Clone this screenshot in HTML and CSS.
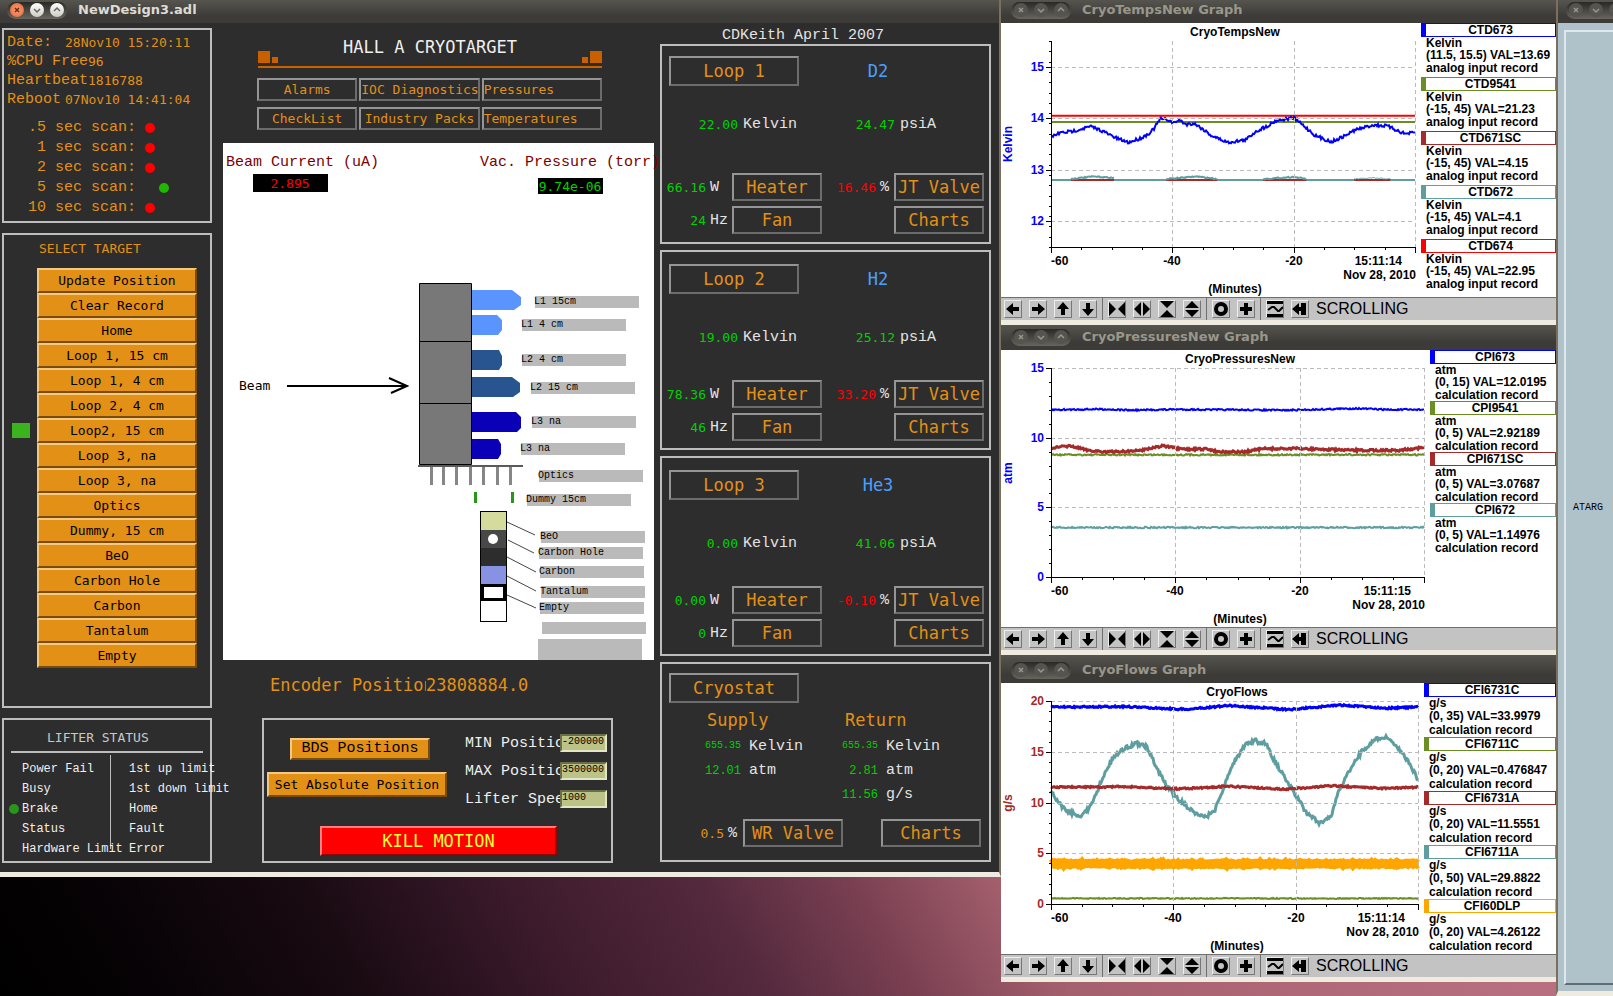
FILE: index.html
```html
<!DOCTYPE html>
<html lang="en">
<head>
    <meta charset="UTF-8">
    <meta name="viewport" content="width=device-width, initial-scale=1.0">
    <title>NewDesign3.adl</title>
    <link rel="stylesheet" href="styles.css">
</head>
<body>
    <!-- shared icons -->
    <svg class="defs" width="0" height="0">
        <symbol id="close" viewBox="0 0 14 14"><path d="M5 5l4 4M9 5l-4 4" fill="none" stroke="currentColor" stroke-width="1.5"/></symbol>
        <symbol id="min" viewBox="0 0 14 14"><path d="M4 6l3 3 3-3" fill="none" stroke="currentColor" stroke-width="1.5"/></symbol>
        <symbol id="max" viewBox="0 0 14 14"><path d="M4 8l3-3 3 3" fill="none" stroke="currentColor" stroke-width="1.5"/></symbol>
        <symbol id="left" viewBox="0 0 16 16"><path d="M1 8l7-6v4h6v4H8v4z"/></symbol>
        <symbol id="right" viewBox="0 0 16 16"><path d="M15 8L8 2v4H2v4h6v4z"/></symbol>
        <symbol id="up" viewBox="0 0 16 16"><path d="M8 1L2 8h4v6h4V8h4z"/></symbol>
        <symbol id="down" viewBox="0 0 16 16"><path d="M8 15L2 8h4V2h4v6h4z"/></symbol>
        <symbol id="xin" viewBox="0 0 16 16"><path d="M0 1l7 7-7 7zM16 1L9 8l7 7z"/></symbol>
        <symbol id="xout" viewBox="0 0 16 16"><path d="M7 1v14L0 8zM9 1v14l7-7z"/></symbol>
        <symbol id="yin" viewBox="0 0 16 16"><path d="M1 0h14L8 7zM1 16h14L8 9z"/></symbol>
        <symbol id="yout" viewBox="0 0 16 16"><path d="M1 7h14L8 0zM1 9h14l-7 7z"/></symbol>
        <symbol id="reset" viewBox="0 0 16 16"><ellipse cx="8" cy="8" rx="5" ry="5" fill="none" stroke="#000" stroke-width="4"/></symbol>
        <symbol id="plus" viewBox="0 0 16 16"><path d="M6 2h4v4h4v4h-4v4H6v-4H2V6h4z"/></symbol>
        <symbol id="wave" viewBox="0 0 16 16"><path d="M0 0h16v3H0zM0 13h16v3H0z"/><path d="M1 9l4-3h2l4 4h1l4-4" fill="none" stroke="#000" stroke-width="2"/></symbol>
        <symbol id="end" viewBox="0 0 16 16"><path d="M0 8l7-6v4h2V2h5v12H9v-4H7v4z"/></symbol>
    </svg>

    <main class="window medm">
        <header class="titlebar active">
            <div class="controls">
                <button aria-label="Close" class="hot"><svg><use href="#close"/></svg></button>
                <button aria-label="Minimize"><svg><use href="#min"/></svg></button>
                <button aria-label="Maximize"><svg><use href="#max"/></svg></button>
            </div>
            <h1>NewDesign3.adl</h1>
        </header>

        <div class="panels">
            <div class="side">
                <section class="box status">
                    <p><span class="key">Date:</span><span class="val">28Nov10 15:20:11</span></p>
                    <p><span>%CPU Free</span><span class="val">96</span></p>
                    <p><span>Heartbeat</span><span class="val">1816788</span></p>
                    <p><span class="key">Reboot</span><span class="val">07Nov10 14:41:04</span></p>
                    <ul class="scans">
                        <li><span>.5 sec scan:</span><i class="led"></i></li>
                        <li><span>1 sec scan:</span><i class="led"></i></li>
                        <li><span>2 sec scan:</span><i class="led"></i></li>
                        <li><span>5 sec scan:</span><i class="led ok"></i></li>
                        <li><span>10 sec scan:</span><i class="led"></i></li>
                    </ul>
                </section>

                <section class="box targets">
                    <h2>SELECT TARGET</h2>
                    <ul>
                        <li><button>Update Position</button></li>
                        <li><button>Clear Record</button></li>
                        <li><button>Home</button></li>
                        <li><button>Loop 1, 15 cm</button></li>
                        <li><button>Loop 1, 4 cm</button></li>
                        <li><button>Loop 2, 4 cm</button></li>
                        <li><i class="marker"></i><button>Loop2, 15 cm</button></li>
                        <li><button>Loop 3, na</button></li>
                        <li><button>Loop 3, na</button></li>
                        <li><button>Optics</button></li>
                        <li><button>Dummy, 15 cm</button></li>
                        <li><button>BeO</button></li>
                        <li><button>Carbon Hole</button></li>
                        <li><button>Carbon</button></li>
                        <li><button>Tantalum</button></li>
                        <li><button>Empty</button></li>
                    </ul>
                </section>

                <section class="box lifter">
                    <h2>LIFTER STATUS</h2>
                    <ul>
                        <li><span>Power Fail</span><span>1st up limit</span></li>
                        <li><span>Busy</span><span>1st down limit</span></li>
                        <li><i class="led"></i><span>Brake</span><span>Home</span></li>
                        <li><span>Status</span><span>Fault</span></li>
                        <li><span>Hardware Limit</span><span>Error</span></li>
                    </ul>
                </section>
            </div>

            <div class="center">
                <div class="banner">
                    <i class="sq"></i><i class="sq small"></i>
                    <h2>HALL A CRYOTARGET</h2>
                    <i class="sq small"></i><i class="sq"></i>
                </div>
                <nav class="menu">
                    <button class="flat">Alarms</button>
                    <button class="flat">IOC Diagnostics</button>
                    <button class="flat start">Pressures</button>
                    <button class="flat">CheckList</button>
                    <button class="flat">Industry Packs</button>
                    <button class="flat start">Temperatures</button>
                </nav>

                <svg class="diagram" viewBox="0 0 431 517">
                    <g class="caption">
                        <text x="3" y="23">Beam Current (uA)</text>
                        <text x="257" y="23">Vac. Pressure (torr)</text>
                    </g>
                    <rect x="30" y="31" width="75" height="18"/>
                    <text class="reading" x="67" y="45" fill="#f00">2.895</text>
                    <rect x="315" y="35" width="65" height="16"/>
                    <text class="reading" x="347" y="48" fill="#00d000">9.74e-06</text>

                    <!-- beam -->
                    <text class="beam" x="16" y="247">Beam</text>
                    <path d="M64 243h120M166 235l18 8-16 7" fill="none" stroke="#000" stroke-width="2"/>

                    <!-- cells -->
                    <path d="M196.500 140.500h52v181h-52zM196.500 198.500h52M196.500 260.500h52" fill="#787878" stroke="#000"/>
                    <path d="M249 147h40l9 7v8l-7 5h-42zM249 172h25l5 5v10l-4 5h-26z" fill="#5a94ff"/>
                    <path d="M249 207h27l3 6v9l-3 5h-27zM249 234h40l8 6v9l-7 5h-41z" fill="#28558f"/>
                    <path d="M249 269h44l5 5v11l-4 4h-45zM249 296h26l3 5v10l-3 5h-26z" fill="#0a00b8"/>
                    <path d="M195 322h105v2H195z" fill="#5a5a5a"/>
                    <path d="M208.500 324v18M220.500 324v18M233.500 324v18M247.500 324v18M260.500 324v18M274.500 324v18M287.500 324v18" stroke="#868686" stroke-width="3"/>
                    <path d="M251 349h3v11h-3zM288 349h3v11h-3z" fill="#27961a"/>

                    <!-- solid targets -->
                    <rect x="257" y="368" width="27" height="19" fill="#d5db9d"/>
                    <rect x="257" y="387" width="27" height="18" fill="#484848"/>
                    <circle cx="270" cy="396" r="5" fill="#fff"/>
                    <rect x="257" y="405" width="27" height="18" fill="#2d2d2d"/>
                    <rect x="257" y="423" width="27" height="18" fill="#8793e2"/>
                    <rect x="257" y="441" width="27" height="17"/>
                    <rect x="261" y="444" width="19" height="11" fill="#fff"/>
                    <rect x="257.500" y="368.500" width="26" height="110" fill="none" stroke="#000"/>
                    <path d="M284 379l28 13M285 397l26 13M284 414l29 15M284 433l29 15M284 452l29 13" stroke="#444"/>

                    <!-- name plates -->
                    <path d="M312 153h104v12H312zM299 176h104v12H299zM299 211h104v12H299zM308 239h104v12H308zM309 273h104v12H309zM298 300h104v12H298zM316 327h104v12H316zM304 351h104v12H304zM318 388h104v12H318zM316 404h104v12H316zM317 423h104v12H317zM318 443h104v12H318zM317 459h104v12H317zM319 479h104v12H319zM315 496h104v21H315z" fill="#bababa"/>
                    <g class="plates">
                        <text x="311" y="161">L1 15cm</text>
                        <text x="298" y="184">L1 4 cm</text>
                        <text x="298" y="219">L2 4 cm</text>
                        <text x="307" y="247">L2 15 cm</text>
                        <text x="308" y="281">L3 na</text>
                        <text x="297" y="308">L3 na</text>
                        <text x="315" y="335">Optics</text>
                        <text x="303" y="359">Dummy 15cm</text>
                        <text x="317" y="396">BeO</text>
                        <text x="315" y="412">Carbon Hole</text>
                        <text x="316" y="431">Carbon</text>
                        <text x="317" y="451">Tantalum</text>
                        <text x="316" y="467">Empty</text>
                    </g>
                </svg>

                <p class="encoder"><span>Encoder Position</span><b>23808884.0</b></p>

                <section class="box motion">
                    <div class="actions">
                        <button class="bds">BDS Positions</button>
                        <button class="abs">Set Absolute Position</button>
                    </div>
                    <form class="fields">
                        <label for="minpos">MIN Position</label><input id="minpos" value="-200000">
                        <label for="maxpos">MAX Position</label><input id="maxpos" value="3500000">
                        <label for="speed">Lifter Speed</label><input id="speed" value="1000">
                    </form>
                    <button class="kill">KILL MOTION</button>
                </section>
            </div>

            <div class="loops">
                <p class="credit">CDKeith April 2007</p>
                <section class="box loop first">
                    <div class="head"><button class="flat">Loop 1</button><h2>D2</h2></div>
                    <div class="temps"><b>22.00</b><span>Kelvin</span><b>24.47</b><span>psiA</span></div>
                    <div class="ctl">
                        <b>66.16</b><span>W</span><button class="flat">Heater</button>
                        <b class="bad">16.46</b><span>%</span><button class="flat">JT Valve</button>
                        <b>24</b><span>Hz</span><button class="flat">Fan</button>
                        <button class="flat last">Charts</button>
                    </div>
                </section>
                <section class="box loop">
                    <div class="head"><button class="flat">Loop 2</button><h2>H2</h2></div>
                    <div class="temps"><b>19.00</b><span>Kelvin</span><b>25.12</b><span>psiA</span></div>
                    <div class="ctl">
                        <b>78.36</b><span>W</span><button class="flat">Heater</button>
                        <b class="bad">33.20</b><span>%</span><button class="flat">JT Valve</button>
                        <b>46</b><span>Hz</span><button class="flat">Fan</button>
                        <button class="flat last">Charts</button>
                    </div>
                </section>
                <section class="box loop">
                    <div class="head"><button class="flat">Loop 3</button><h2>He3</h2></div>
                    <div class="temps"><b>0.00</b><span>Kelvin</span><b>41.06</b><span>psiA</span></div>
                    <div class="ctl">
                        <b>0.00</b><span>W</span><button class="flat">Heater</button>
                        <b class="bad">-0.10</b><span>%</span><button class="flat">JT Valve</button>
                        <b>0</b><span>Hz</span><button class="flat">Fan</button>
                        <button class="flat last">Charts</button>
                    </div>
                </section>
                <section class="box cryostat">
                    <div class="head"><button class="flat">Cryostat</button></div>
                    <div class="lines">
                        <h3>Supply</h3><h3 class="return">Return</h3>
                        <b class="tiny">655.35</b><span>Kelvin</span><b class="tiny">655.35</b><span>Kelvin</span>
                        <b>12.01</b><span>atm</span><b>2.81</b><span>atm</span>
                        <b class="flow">11.56</b><span>g/s</span>
                    </div>
                    <div class="valve"><b>0.5</b><span>%</span><button class="flat">WR Valve</button><button class="flat last">Charts</button></div>
                </section>
            </div>
        </div>
    </main>

    <div class="graphs">
        <section class="window graph temps-graph">
            <header class="titlebar">
                <div class="controls">
                    <button aria-label="Close"><svg><use href="#close"/></svg></button>
                    <button aria-label="Minimize"><svg><use href="#min"/></svg></button>
                    <button aria-label="Maximize"><svg><use href="#max"/></svg></button>
                </div>
                <h1>CryoTempsNew Graph</h1>
            </header>
            <div class="plot">
                <svg class="chart" id="temps"></svg>
                <dl class="legend">
                    <dt class="blue">CTD673</dt><dd>Kelvin</dd><dd>(11.5, 15.5) VAL=13.69</dd><dd>analog input record</dd>
                    <dt class="olive">CTD9541</dt><dd>Kelvin</dd><dd>(-15, 45) VAL=21.23</dd><dd>analog input record</dd>
                    <dt class="brown">CTD671SC</dt><dd>Kelvin</dd><dd>(-15, 45) VAL=4.15</dd><dd>analog input record</dd>
                    <dt class="teal">CTD672</dt><dd>Kelvin</dd><dd>(-15, 45) VAL=4.1</dd><dd>analog input record</dd>
                    <dt class="red">CTD674</dt><dd>Kelvin</dd><dd>(-15, 45) VAL=22.95</dd><dd>analog input record</dd>
                </dl>
            </div>
            <div class="toolbar"></div>
        </section>

        <section class="window graph press-graph">
            <header class="titlebar">
                <div class="controls">
                    <button aria-label="Close"><svg><use href="#close"/></svg></button>
                    <button aria-label="Minimize"><svg><use href="#min"/></svg></button>
                    <button aria-label="Maximize"><svg><use href="#max"/></svg></button>
                </div>
                <h1>CryoPressuresNew Graph</h1>
            </header>
            <div class="plot">
                <svg class="chart" id="pressures"></svg>
                <dl class="legend">
                    <dt class="blue">CPI673</dt><dd>atm</dd><dd>(0, 15) VAL=12.0195</dd><dd>calculation record</dd>
                    <dt class="olive">CPI9541</dt><dd>atm</dd><dd>(0, 5) VAL=2.92189</dd><dd>calculation record</dd>
                    <dt class="brown">CPI671SC</dt><dd>atm</dd><dd>(0, 5) VAL=3.07687</dd><dd>calculation record</dd>
                    <dt class="teal">CPI672</dt><dd>atm</dd><dd>(0, 5) VAL=1.14976</dd><dd>calculation record</dd>
                </dl>
            </div>
            <div class="toolbar"></div>
        </section>

        <section class="window graph flow-graph">
            <header class="titlebar">
                <div class="controls">
                    <button aria-label="Close"><svg><use href="#close"/></svg></button>
                    <button aria-label="Minimize"><svg><use href="#min"/></svg></button>
                    <button aria-label="Maximize"><svg><use href="#max"/></svg></button>
                </div>
                <h1>CryoFlows Graph</h1>
            </header>
            <div class="plot">
                <svg class="chart" id="flows"></svg>
                <dl class="legend">
                    <dt class="blue">CFI6731C</dt><dd>g/s</dd><dd>(0, 35) VAL=33.9979</dd><dd>calculation record</dd>
                    <dt class="olive">CFI6711C</dt><dd>g/s</dd><dd>(0, 20) VAL=0.476847</dd><dd>calculation record</dd>
                    <dt class="brown">CFI6731A</dt><dd>g/s</dd><dd>(0, 20) VAL=11.5551</dd><dd>calculation record</dd>
                    <dt class="teal">CFI6711A</dt><dd>g/s</dd><dd>(0, 50) VAL=29.8822</dd><dd>calculation record</dd>
                    <dt class="orange">CFI60DLP</dt><dd>g/s</dd><dd>(0, 20) VAL=4.26122</dd><dd>calculation record</dd>
                </dl>
            </div>
            <div class="toolbar"></div>
        </section>
    </div>

    <section class="window atarg">
        <header class="titlebar">
            <div class="controls">
                <button aria-label="Close"><svg><use href="#close"/></svg></button>
                <button aria-label="Minimize"><svg><use href="#min"/></svg></button>
                <button aria-label="Maximize"><svg><use href="#max"/></svg></button>
            </div>
        </header>
        <div class="pane"><span>ATARG</span></div>
    </section>

    <script src="charts.js"></script>
</body>
</html>
```
FILE: styles.css
```css
* {
    margin: 0;
    padding: 0;
    box-sizing: border-box;
}

body {
    min-height: 100vh;
    display: grid;
    grid-template-columns: 1001fr 555fr 57fr;
    align-items: start;
    overflow: hidden;
    background: linear-gradient(60deg, #000 0%, #080306 8%, #1a0b13 17%, #3b1a2b 26%, #54293d 35%, #7a4052 42%, #a5606d 49%, #b87080 70%);
    font-family: "Liberation Mono", monospace;
    font-size: 15px;
    color: #f0f0f0;
}

.defs {
    position: absolute;
}

ul {
    list-style: none;
}

b, h1, h2, h3 {
    font-weight: normal;
}

i {
    display: block;
}

button, input {
    font: inherit;
    border-radius: 0;
}

/* window frames */
.window {
    min-width: 0;
    border-bottom: 5px solid #efebe0;
    overflow: hidden;
}

.titlebar {
    display: flex;
    align-items: flex-end;
    height: 23px;
    padding: 0 10px 4px;
    background: linear-gradient(#55544e, #3c3b37 70%);
    color: #9a968b;
}

.titlebar h1 {
    margin-left: 11px;
    font: bold 13px/18px "DejaVu Sans", sans-serif;
    white-space: nowrap;
}

.controls {
    display: flex;
    gap: 6px;
    height: 17px;
    padding: 1px 3px;
    border-radius: 9px;
    background: linear-gradient(#2a2926, #66655e);
}

.controls button {
    width: 14px;
    height: 14px;
    border: none;
    border-radius: 7px;
    background: #55544f;
    color: #9a968b;
}

.controls svg {
    display: block;
    width: 14px;
    height: 14px;
}

.active {
    padding-left: 7px;
    color: #dfdbd2;
}

.active .controls button {
    background: linear-gradient(#fff, #cfccc4);
    color: #666;
}

.active .controls .hot {
    background: radial-gradient(#f9a27c, #e8622f);
    color: #6b2a12;
}

/* control screen */
.medm {
    background: #2d2d2d;
    border-right: 2px solid #7a705d;
}

.panels {
    display: grid;
    grid-template-columns: 210px 1fr 331px;
    padding: 5px 8px 9px 2px;
}

.box {
    border: 2px solid #bdbdbd;
}

.flat {
    background: none;
    border: 2px solid;
    border-color: #959595 #6c6c6c #6c6c6c #959595;
    color: #e29016;
    font: 17px "DejaVu Sans Mono", monospace;
    white-space: nowrap;
    overflow: hidden;
}

.led {
    width: 10px;
    height: 10px;
    border-radius: 5px;
    background: #f00;
}

/* left column */
.side {
    display: flex;
    flex-direction: column;
    gap: 10px;
}

.status {
    height: 195px;
    padding: 3px;
    color: #e29016;
}

.status p {
    display: flex;
    line-height: 19px;
    white-space: nowrap;
}

.key {
    width: 58px;
}

.val {
    font: 13px/19px "DejaVu Sans Mono", monospace;
}

.scans {
    padding-top: 9px;
}

.scans li {
    display: grid;
    grid-template-columns: 129px 1fr;
    gap: 9px;
    align-items: center;
    line-height: 20px;
    text-align: right;
}

.scans .ok {
    background: #1fb800;
    margin-left: 14px;
}

.targets {
    height: 475px;
    padding-top: 5px;
}

.targets h2 {
    padding-left: 35px;
    color: #e29016;
    font: 13px/18px "DejaVu Sans Mono", monospace;
}

.targets ul {
    padding-top: 10px;
}

.targets li {
    display: flex;
    justify-content: flex-end;
    align-items: center;
    padding-right: 13px;
}

.targets button {
    width: 160px;
    height: 25px;
    color: #000;
}

.targets button, .actions button {
    background: #e29016;
    border: 2px solid;
    border-color: #f3c883 #7a4c08 #7a4c08 #f3c883;
    font: 13px "DejaVu Sans Mono", monospace;
    white-space: nowrap;
}

.marker {
    width: 18px;
    height: 15px;
    margin-right: 7px;
    background: #3bb31e;
}

.lifter {
    height: 145px;
    padding: 9px 7px 0;
}

.lifter h2 {
    padding: 0 0 4px 36px;
    border-bottom: 2px solid #bdbdbd;
    color: #c8c8c8;
    font: 13px/18px "DejaVu Sans Mono", monospace;
}

.lifter ul {
    margin-top: 2px;
    padding-top: 4px;
    background: linear-gradient(#bdbdbd, #bdbdbd) 99px 0 / 1px 94px no-repeat;
}

.lifter li {
    display: grid;
    grid-template-columns: 11px 107px 1fr;
    align-items: center;
    font-size: 12px;
    line-height: 20px;
    white-space: nowrap;
}

.lifter li span:nth-last-child(2) {
    grid-column: 2;
}

.lifter .led {
    margin-left: -2px;
    background: #27961a;
}

/* middle column */
.center {
    padding: 0 6px 0 11px;
}

.banner {
    display: flex;
    align-items: flex-end;
    gap: 2px;
    height: 40px;
    margin: 0 52px 0 35px;
    padding-bottom: 3px;
    border-bottom: 2px solid #c86000;
}

.banner h2 {
    flex: 1;
    font: 17px/32px "DejaVu Sans Mono", monospace;
    text-align: center;
    white-space: nowrap;
}

.sq {
    width: 12px;
    height: 12px;
    background: #c86000;
}

.sq.small {
    width: 6px;
    height: 6px;
}

.menu {
    display: grid;
    grid-template-columns: 5fr 6fr 6fr;
    gap: 6px 2px;
    margin: 10px 52px 13px 34px;
}

.menu .flat {
    height: 23px;
    min-width: 0;
    font-size: 13px;
}

.menu .start {
    text-align: left;
}

.diagram {
    display: block;
    width: 100%;
    background: #fff;
    overflow: visible;
}

.caption {
    fill: #7c0000;
}

.reading {
    font: 13px "DejaVu Sans Mono", monospace;
    text-anchor: middle;
}

.beam {
    font: 13px "DejaVu Sans Mono", monospace;
}

.plates {
    font-size: 10px;
}

.encoder {
    display: flex;
    margin: 10px 0 18px 47px;
    color: #e29016;
    font: 17px/30px "DejaVu Sans Mono", monospace;
}

.encoder span {
    width: 156px;
    overflow: hidden;
    white-space: nowrap;
}

.motion {
    display: grid;
    grid-template-columns: 1fr 141px;
    align-items: start;
    height: 145px;
    margin: 0 41px 0 39px;
    padding: 14px 5px 0 3px;
}

.actions {
    display: flex;
    flex-direction: column;
    align-items: center;
    gap: 12px;
    width: 180px;
    padding-top: 4px;
}

.actions .bds {
    width: 140px;
    height: 22px;
    margin-left: 6px;
    font: 15px/16px "Liberation Mono", monospace;
}

.actions .abs {
    width: 180px;
    height: 25px;
}

.fields {
    display: grid;
    grid-template-columns: 95px 46px;
    row-gap: 9px;
}

.fields label {
    overflow: hidden;
    line-height: 19px;
    white-space: nowrap;
}

.fields input {
    width: 47px;
    height: 18px;
    padding-bottom: 4px;
    background: #bcc387;
    border: 2px solid;
    border-color: #6b6e48 #e2e6c4 #e2e6c4 #6b6e48;
    font-size: 10px;
    color: #000;
}

.kill {
    grid-column: 1 / 3;
    width: 237px;
    height: 30px;
    margin: 12px 0 0 53px;
    background: #f00;
    border: 2px solid;
    border-color: #ff8080 #900000 #900000 #ff8080;
    color: #ff3;
    font: 17px "DejaVu Sans Mono", monospace;
}

/* right column */
.loops {
    display: flex;
    flex-direction: column;
    gap: 6px;
    color: #e4e4e4;
}

.credit {
    height: 10px;
    padding-left: 62px;
    line-height: 15px;
}

.loops .box {
    height: 200px;
}

.loops b {
    color: #00d000;
    font: 13px "DejaVu Sans Mono", monospace;
    text-align: right;
}

.loops .bad {
    color: #f00;
}

.head {
    display: grid;
    grid-template-columns: 130px 158px;
    align-items: center;
    padding: 12px 0 0 7px;
}

.first .head {
    padding-top: 10px;
}

.head .flat {
    height: 30px;
}

.head h2 {
    color: #4aa0ff;
    font: 17px "DejaVu Sans Mono", monospace;
    text-align: center;
}

.temps {
    display: grid;
    grid-template-columns: 76px 71px 76px 1fr;
    column-gap: 5px;
    align-items: center;
    height: 20px;
    margin: 33px 0;
}

.first .temps {
    margin: 28px 0 39px;
}

.ctl {
    display: grid;
    grid-template-columns: 44px 18px 90px 1fr 10px 90px;
    gap: 5px 4px;
    align-items: center;
    padding-right: 5px;
}

.ctl .flat, .valve .flat {
    height: 28px;
}

.ctl .last {
    grid-column: 6;
}

.cryostat .head {
    padding-top: 9px;
}

.lines {
    display: grid;
    grid-template-columns: 79px 58px 63px 1fr;
    column-gap: 8px;
    grid-template-rows: 30px;
    align-items: center;
    padding-top: 2px;
}

.lines span {
    line-height: 24px;
}

.lines h3 {
    grid-column: span 2;
    padding-left: 45px;
    color: #e29016;
    font: 17px "DejaVu Sans Mono", monospace;
}

.lines .return {
    padding-left: 30px;
}

.lines b {
    font: 12px "Liberation Mono", monospace;
}

.lines .tiny {
    font-size: 10px;
    padding-bottom: 4px;
}

.lines .flow {
    grid-column: 3;
}

.valve {
    display: grid;
    grid-template-columns: 62px 11px 100px 1fr;
    gap: 4px;
    align-items: center;
    margin-top: 12px;
    padding-right: 8px;
}

.valve b {
    color: #e29016;
}

.valve .last {
    justify-self: end;
    width: 100px;
}

/* strip charts */
.graph {
    background: #fff;
    color: #000;
}

.press-graph .titlebar {
    height: 25px;
}

.flow-graph .titlebar {
    height: 28px;
}

.plot {
    display: flex;
}

.chart {
    flex: 1;
    min-width: 0;
    font: bold 12px "Liberation Sans", sans-serif;
}

.legend {
    width: 135px;
    overflow: hidden;
    font: bold 12px/12px "Liberation Sans", sans-serif;
    white-space: nowrap;
}

.press-graph .legend {
    width: 126px;
}

.flow-graph .legend {
    width: 132px;
}

.legend dt {
    height: 14px;
    border: 1px solid;
    border-left-width: 5px;
    text-align: center;
}

.legend dd {
    padding-left: 5px;
}

.legend dd + dd + dd {
    height: 16px;
    padding-top: 1px;
}

.press-graph .legend dd + dd + dd {
    height: 13px;
}

.flow-graph .legend dd {
    line-height: 13px;
}

.flow-graph .legend dd + dd + dd {
    height: 14px;
}

.legend .blue { border-color: #00f; }
.legend .olive { border-color: #6b8e23; }
.legend .brown { border-color: #a52a2a; }
.legend .teal { border-color: #5f9ea0; }
.legend .red { border-color: #f00; }
.legend .orange { border-color: #ffa500; }

.toolbar {
    display: flex;
    align-items: center;
    gap: 7px;
    height: 23px;
    padding: 0 3px;
    border-top: 1px solid #6f6f6f;
    background: #c3c3c3;
    font: 16px "Liberation Sans", sans-serif;
}

.toolbar button {
    width: 18px;
    height: 18px;
    border: 1px solid;
    border-color: #eee #777 #777 #eee;
    background: #c3c3c3;
}

.toolbar svg {
    display: block;
    width: 16px;
    height: 16px;
}

.toolbar hr {
    align-self: stretch;
    width: 1px;
    margin: 0 -2px;
    border: none;
    background: #6f6f6f;
}

/* ATARG window */
.atarg {
    align-self: stretch;
    display: flex;
    flex-direction: column;
    border-left: 2px solid #7a705d;
    background: #b0c2c9;
    color: #000;
}

.atarg .titlebar {
    flex: none;
    padding-right: 0;
    padding-left: 8px;
}

.pane {
    flex: 1;
    display: flex;
    align-items: center;
    margin: 7px 0 6px 6px;
    padding-left: 7px;
    border: 2px solid #dce8ec;
    border-right: none;
    border-bottom-color: #5f6d73;
    font-size: 10px;
}
```
FILE: charts.js
```js
const NS = 'http://www.w3.org/2000/svg';

// same seed every load so the traces keep their shape
let seed = 7;
function rnd() {
    seed = (seed * 16807) % 2147483647;
    return seed / 2147483647 - 0.5;
}

function add(svg, tag, attrs, text) {
    const el = document.createElementNS(NS, tag);
    for (const k in attrs) el.setAttribute(k, attrs[k]);
    if (text !== undefined) el.textContent = text;
    svg.appendChild(el);
    return el;
}

const X0 = 50, TOP = 18;

function draw(id, c) {
    const svg = document.getElementById(id);
    const R = c.right, B = c.bottom;
    svg.setAttribute('viewBox', `0 0 ${c.width} ${B + 50}`);
    const x = t => X0 + (t + 60) / 60 * (R - X0);
    const y = v => B - (v - c.min) / (c.max - c.min) * (B - TOP);

    for (const s of c.series) {
        const pts = [];
        const step = 60 / (R - X0);
        let i = 0;
        for (let t = s.data[0][0]; t <= s.data[s.data.length - 1][0] + 0.01; t += step) {
            while (i < s.data.length - 2 && s.data[i + 1][0] < t) i++;
            const [t0, v0] = s.data[i], [t1, v1] = s.data[i + 1];
            const v = v0 + (v1 - v0) * (t - t0) / (t1 - t0);
            pts.push(x(t).toFixed(1) + ',' + (y(v) + rnd() * (s.noise || 0)).toFixed(1));
        }
        add(svg, 'polyline', { points: pts.join(' '), fill: 'none', stroke: s.color, 'stroke-width': s.w || 2 });
    }

    // grid
    const grid = { stroke: '#bbb', 'stroke-dasharray': '4 3' };
    for (const v of c.ticks) add(svg, 'path', { d: `M${X0} ${Math.round(y(v)) + .5}H${R}`, ...grid });
    for (const t of [-60, -40, -20, 0]) add(svg, 'path', { d: `M${Math.round(x(t)) + .5} ${TOP}V${B}`, ...grid });

    // axes
    let d = `M${X0 + .5} ${TOP}V${B + .5}H${R + 1}`;
    for (let v = c.min; v <= c.max + 0.001; v += c.minor) d += `M${X0 - 2} ${Math.round(y(v)) + .5}h2`;
    for (const v of c.ticks) d += `M${X0 - 5} ${Math.round(y(v)) + .5}h5`;
    for (let t = -60; t <= 0; t += 5) d += `M${Math.round(x(t)) + .5} ${B}v${t % 20 ? 3 : 6}`;
    add(svg, 'path', { d, fill: 'none', stroke: '#000' });

    for (const v of c.ticks) add(svg, 'text', { x: X0 - 7, y: Math.round(y(v)) + 4, 'text-anchor': 'end', fill: c.color }, v);
    add(svg, 'text', { x: X0, y: B + 18 }, '-60');
    add(svg, 'text', { x: Math.round(x(-40)), y: B + 18, 'text-anchor': 'middle' }, '-40');
    add(svg, 'text', { x: Math.round(x(-20)), y: B + 18, 'text-anchor': 'middle' }, '-20');
    add(svg, 'text', { x: R - 13, y: B + 18, 'text-anchor': 'end' }, c.time);
    add(svg, 'text', { x: R + 1, y: B + 32, 'text-anchor': 'end' }, 'Nov 28, 2010');
    const mid = Math.round((X0 + R) / 2) + 2;
    add(svg, 'text', { x: mid, y: B + 46, 'text-anchor': 'middle' }, '(Minutes)');
    add(svg, 'text', { x: mid, y: 13, 'text-anchor': 'middle' }, c.title);
    const my = Math.round((TOP + B) / 2);
    add(svg, 'text', { x: 11, y: my, 'text-anchor': 'middle', fill: c.color, transform: `rotate(-90 11 ${my})` }, c.unit);
}

const blue = '#00f', olive = '#6b8e23', brown = '#a52a2a', teal = '#5f9ea0';
const flat = v => [[-60, v], [0, v]];

draw('temps', {
    title: 'CryoTempsNew', unit: 'Kelvin', color: blue, time: '15:11:14',
    width: 420, right: 414, bottom: 224, min: 11.5, max: 15.5, minor: 0.2, ticks: [12, 13, 14, 15],
    series: [
        { color: '#f00', data: flat(14.05) },
        { color: olive, data: flat(13.93) },
        { color: teal, data: flat(12.8) },
        { color: brown, data: [[-56.7, 12.8], [-49.5, 12.8]] },
        { color: brown, data: [[-41, 12.8], [-32.5, 12.8]] },
        { color: brown, data: [[-25, 12.8], [-17.8, 12.8]] },
        { color: brown, data: [[-10, 12.8], [-4, 12.8]] },
        { color: teal, noise: 1, data: [[-56.7, 12.82], [-53, 12.87], [-49.5, 12.84]] },
        { color: teal, noise: 1, data: [[-41, 12.82], [-36, 12.87], [-32.5, 12.82]] },
        { color: teal, noise: 1, data: [[-25, 12.82], [-20, 12.86], [-17.8, 12.82]] },
        { color: teal, w: 1, noise: 1, data: [[-10, 12.82], [-7, 12.84], [-4, 12.82]] },
        { color: blue, noise: 3, data: [[-60, 13.64], [-58.4, 13.72], [-56.7, 13.74], [-53.5, 13.84], [-51.8, 13.77],
            [-49.2, 13.61], [-47.2, 13.53], [-45.3, 13.61], [-44, 13.69], [-43, 13.8], [-42, 13.99], [-40.7, 13.97],
            [-39.7, 13.9], [-39, 13.97], [-37.7, 13.88], [-36.4, 13.9], [-35.1, 13.8], [-33.5, 13.66], [-30.9, 13.53],
            [-27.9, 13.58], [-26.3, 13.74], [-24.3, 13.85], [-23, 13.95], [-20, 14.01], [-18.7, 13.89], [-16.4, 13.66],
            [-13.8, 13.54], [-11.9, 13.64], [-9.9, 13.77], [-6.9, 13.87], [-4.6, 13.85], [-1.7, 13.7], [0, 13.72]] }
    ]
});

draw('pressures', {
    title: 'CryoPressuresNew', unit: 'atm', color: blue, time: '15:11:15',
    width: 429, right: 423, bottom: 227, min: 0, max: 15, minor: 1, ticks: [0, 5, 10, 15],
    series: [
        { color: blue, noise: 1.5, data: [[-60, 12], [-52, 12.05], [-47, 11.97], [-40, 12.03], [-22, 11.97], [-11, 12.1], [-5, 12], [0, 12.02]] },
        { color: olive, noise: 1.5, data: flat(8.77) },
        { color: teal, noise: 1.5, data: flat(3.55) },
        { color: brown, w: 3, noise: 2, data: [[-60, 9.26], [-57, 9.4], [-54, 9.1], [-51, 8.97], [-46, 9.06], [-42, 9.42],
            [-39, 9.16], [-35, 9.18], [-33, 9], [-29, 8.97], [-26, 9.2], [-20, 9.22], [-12, 9.09], [-4, 9.1], [0, 9.3]] }
    ]
});

draw('flows', {
    title: 'CryoFlows', unit: 'g/s', color: brown, time: '15:11:14',
    width: 423, right: 417, bottom: 221, min: 0, max: 20, minor: 1, ticks: [0, 5, 10, 15, 20],
    series: [
        { color: blue, w: 3, noise: 1.5, data: [[-60, 19.4], [-48, 19.45], [-38, 19.17], [-31, 19.55], [-21, 19.15], [-13, 19.6], [-5, 19.3], [0, 19.4]] },
        { color: olive, noise: 1, data: flat(0.55) },
        { color: '#ffa500', w: 9, noise: 1.5, data: flat(3.96) },
        { color: teal, w: 3, noise: 4, data: [[-60, 11.2], [-58.4, 9.7], [-57.1, 9.1], [-55.1, 8.7], [-53.5, 9.6], [-51.5, 12.5],
            [-49.9, 14.4], [-47.6, 15.5], [-46, 15.8], [-44.4, 15.5], [-43.1, 13.9], [-41.1, 11.6], [-38.9, 10.2], [-36.9, 9.2],
            [-35, 8.5], [-33.3, 9.1], [-31.7, 11.6], [-30.1, 14], [-28.1, 15.8], [-26.8, 16.1], [-24.9, 15.8], [-23.3, 13.9],
            [-21.3, 12], [-19.7, 10.4], [-18.1, 8.9], [-16.1, 8], [-14.2, 8.6], [-12.9, 11.2], [-10.9, 13.5], [-9, 15.2],
            [-6.7, 16.3], [-4.7, 16.4], [-3.1, 15.2], [-1.5, 14], [0, 12.2]] },
        { color: brown, w: 3, noise: 1.5, data: [[-60, 11.5], [-48, 11.55], [-39, 11.35], [-31, 11.6], [-22, 11.3], [-14, 11.65], [-6, 11.4], [0, 11.5]] }
    ]
});

// every graph window has the same tool bar
const tools = [['left', 'right', 'up', 'down'], ['xin', 'xout', 'yin', 'yout'], ['reset', 'plus'], ['wave', 'end']];
document.querySelectorAll('.toolbar').forEach(bar => {
    bar.innerHTML = tools.map(g => g.map(n =>
        `<button aria-label="${n}"><svg><use href="#${n}"/></svg></button>`).join('')).join('<hr>') + '<span>SCROLLING</span>';
});
```
